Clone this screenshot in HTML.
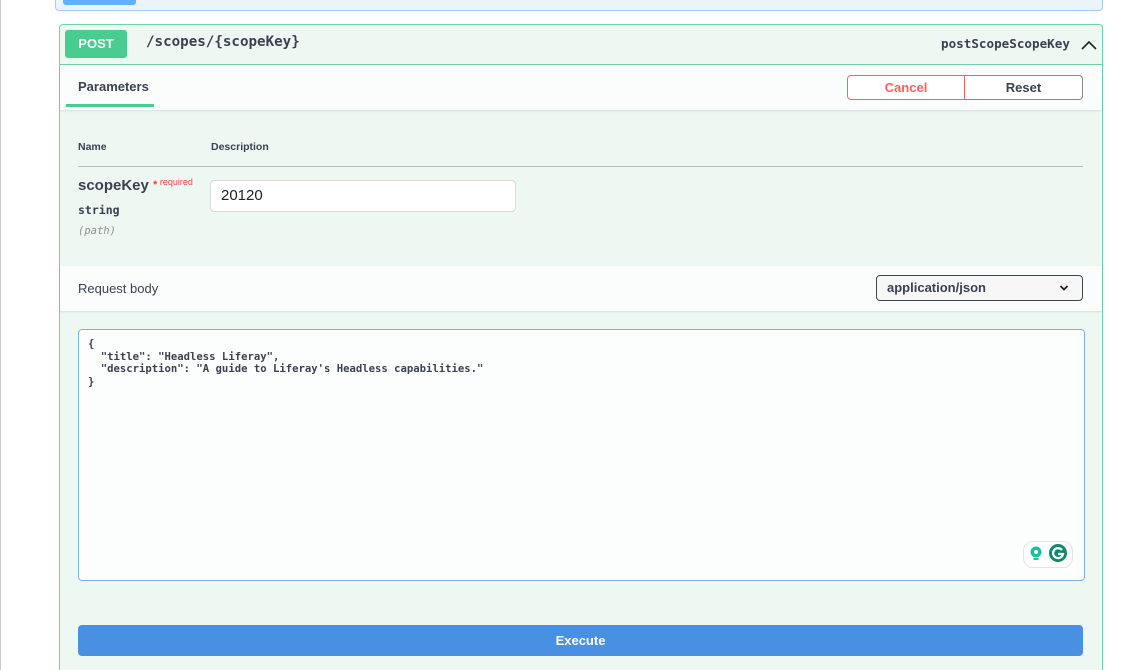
<!DOCTYPE html>
<html><head><meta charset="utf-8"><style>
html,body{margin:0;width:1124px;height:670px;overflow:hidden}
body{background:#fff;font-family:"Liberation Sans",sans-serif;position:relative}
.a{position:absolute}
.mono{font-family:"DejaVu Sans Mono","Liberation Mono",monospace}
</style></head><body>
<div class="a" style="left:0;top:0;width:1px;height:670px;background:#ccc"></div>
<div class="a" style="left:55px;top:-4px;width:1046px;height:13px;background:#ebf3fb;border:1px solid #a9c9ee;border-radius:4px"></div>
<div class="a" style="left:63px;top:0;width:73px;height:5px;background:#61affe;border-radius:0 0 3px 3px"></div>

<div class="a" style="left:59px;top:24px;width:1042px;height:650px;background:#edf8f3;border:1px solid #6fd3a2;border-radius:4px"></div>
<div class="a" style="left:60px;top:64px;width:1042px;height:1px;background:#6fd3a2"></div>
<div class="a" style="left:65px;top:30px;width:62px;height:28px;background:#49cc90;border-radius:3px;color:#fff;font-weight:bold;font-size:13px;text-align:center;line-height:27px">POST</div>
<div class="a mono" style="left:146px;top:34px;font-size:14.2px;font-weight:bold;color:#3b4151">/scopes/{scopeKey}</div>
<div class="a mono" style="left:941px;top:36px;font-size:12.6px;font-weight:bold;color:#3b4151">postScopeScopeKey</div>
<svg class="a" style="left:1080px;top:38px" width="18" height="14" viewBox="0 0 18 14"><path d="M2 11 L9 4 L16 11" fill="none" stroke="#222" stroke-width="1.6"/></svg>

<div class="a" style="left:60px;top:65px;width:1042px;height:45px;background:#fbfdfc;box-shadow:0 1px 2px rgba(0,0,0,.1)"></div>
<div class="a" style="left:78px;top:79px;font-size:13px;font-weight:bold;color:#3b4151">Parameters</div>
<div class="a" style="left:66px;top:104px;width:88px;height:3px;background:#49cc90"></div>
<div class="a" style="left:847px;top:75px;width:116px;height:23px;border:1px solid #ff6060;border-radius:4px 0 0 4px;color:#ff6060;font-weight:bold;font-size:13px;text-align:center;line-height:23px;background:#fff">Cancel</div>
<div class="a" style="left:965px;top:75px;width:117px;height:23px;border:1px solid #888;border-left:none;border-radius:0 4px 4px 0;color:#3b4151;font-weight:bold;font-size:13px;text-align:center;line-height:23px;background:#fff">Reset</div>

<div class="a" style="left:78px;top:141px;font-size:10.5px;font-weight:bold;color:#3b4151">Name</div>
<div class="a" style="left:211px;top:141px;font-size:10.5px;font-weight:bold;color:#3b4151">Description</div>
<div class="a" style="left:78px;top:166px;width:1005px;height:1px;background:#b7bcc4"></div>
<div class="a" style="left:78px;top:177px;font-size:15px;font-weight:bold;color:#3b4151">scopeKey <span style="color:#f93e3e;font-size:11px;vertical-align:2px">*</span><span style="color:#f93e3e;font-size:9px;font-weight:normal;vertical-align:5px"> required</span></div>
<div class="a mono" style="left:78px;top:203px;font-size:11.5px;font-weight:bold;color:#3b4151">string</div>
<div class="a mono" style="left:78px;top:225px;font-size:10.5px;font-style:italic;color:#909090">(path)</div>
<div class="a" style="left:210px;top:180px;width:304px;height:30px;background:#fff;border:1px solid #d9d9d9;border-radius:4px;font-size:15px;color:#222;line-height:30px;text-indent:10px">20120</div>

<div class="a" style="left:60px;top:266px;width:1042px;height:45px;background:#fbfdfc;box-shadow:0 1px 2px rgba(0,0,0,.1)"></div>
<div class="a" style="left:78px;top:281px;font-size:13px;color:#3b4151">Request body</div>
<div class="a" style="left:876px;top:275px;width:205px;height:24px;border:1.5px solid #41444e;border-radius:4px;background:#f7f7f7;font-size:13px;font-weight:bold;color:#3b4151;line-height:24px;text-indent:10px">application/json</div>
<svg class="a" style="left:1059px;top:284px" width="10" height="8" viewBox="0 0 10 8"><path d="M1.5 2 L5 5.5 L8.5 2" fill="none" stroke="#222" stroke-width="1.8"/></svg>

<div class="a" style="left:78px;top:329px;width:1005px;height:250px;background:#fcfdfd;border:1px solid #7fb1e9;border-radius:4px"></div>
<pre class="a mono" style="left:88px;top:338px;margin:0;font-size:10.6px;line-height:12.5px;font-weight:bold;color:#3b4151">{
  "title": "Headless Liferay",
  "description": "A guide to Liferay's Headless capabilities."
}</pre>
<div class="a" style="left:1023px;top:541px;width:48px;height:25px;background:#fff;border:1px solid #e4e4e4;border-radius:10px"></div>
<svg class="a" style="left:1028px;top:543px" width="42" height="22" viewBox="0 0 42 22"><circle cx="8" cy="9" r="5.5" fill="#15c39a"/><circle cx="8" cy="9" r="2" fill="#fff"/><rect x="5.5" y="15" width="5" height="2" fill="#15c39a"/><circle cx="30" cy="10" r="9" fill="#0f8a6b"/><path d="M34 7 A5 5 0 1 0 35 11 H30" fill="none" stroke="#fff" stroke-width="2.2"/></svg>

<div class="a" style="left:78px;top:625px;width:1005px;height:31px;background:#4990e2;border-radius:4px;color:#fff;font-weight:bold;font-size:13px;text-align:center;line-height:31px">Execute</div>
</body></html>
